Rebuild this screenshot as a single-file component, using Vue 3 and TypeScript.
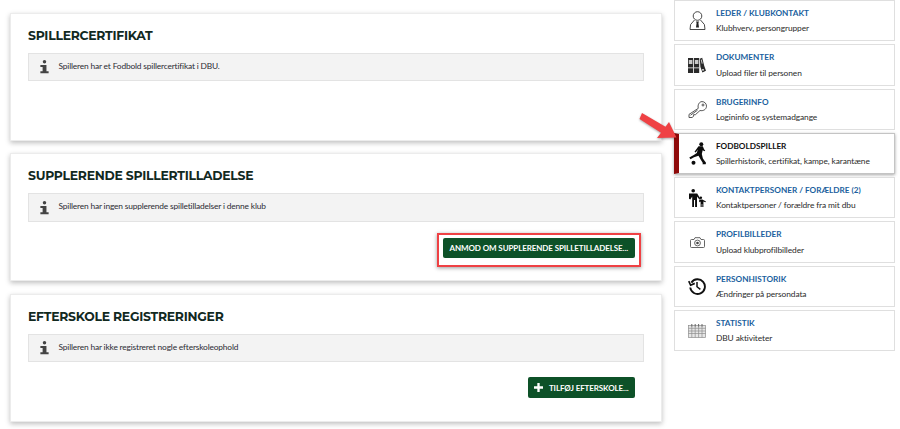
<script setup lang="ts">
const cards = [
  { title: 'SPILLERCERTIFIKAT', text: 'Spilleren har et Fodbold spillercertifikat i DBU.', action: '' },
  { title: 'SUPPLERENDE SPILLERTILLADELSE', text: 'Spilleren har ingen supplerende spilletilladelser i denne klub', action: 'request' },
  { title: 'EFTERSKOLE REGISTRERINGER', text: 'Spilleren har ikke registreret nogle efterskoleophold', action: 'add' },
]
const items = [
  { icon: 'leader', title: 'LEDER / KLUBKONTAKT', sub: 'Klubhverv, persongrupper' },
  { icon: 'docs', title: 'DOKUMENTER', sub: 'Upload filer til personen' },
  { icon: 'key', title: 'BRUGERINFO', sub: 'Logininfo og systemadgange' },
  { icon: 'player', title: 'FODBOLDSPILLER', sub: 'Spillerhistorik, certifikat, kampe, karantæne', active: true },
  { icon: 'family', title: 'KONTAKTPERSONER / FORÆLDRE (2)', sub: 'Kontaktpersoner / forældre fra mit dbu' },
  { icon: 'camera', title: 'PROFILBILLEDER', sub: 'Upload klubprofilbilleder' },
  { icon: 'history', title: 'PERSONHISTORIK', sub: 'Ændringer på persondata' },
  { icon: 'stats', title: 'STATISTIK', sub: 'DBU aktiviteter' },
]
</script>

<template>
  <div class="page">
    <main class="left">
      <div class="stub"></div>
      <section v-for="c in cards" :key="c.title" class="card">
        <h2>{{ c.title }}</h2>
        <div class="alert">
          <svg class="info" viewBox="0 0 12 18" width="9" height="15">
            <circle cx="6" cy="2.600" r="2.300" fill="#444" />
            <path d="M.5 7h8.100v8.400H11.500V18H.5v-2.600h3V9.600h-3z" fill="#444" />
          </svg>
          <span>{{ c.text }}</span>
        </div>
        <div v-if="c.action === 'request'" class="actions">
          <div class="highlight">
            <button class="btn">ANMOD OM SUPPLERENDE SPILLETILLADELSE...</button>
          </div>
        </div>
        <div v-if="c.action === 'add'" class="actions add">
          <button class="btn add-btn">
            <svg viewBox="0 0 10 10" width="9" height="9"><path d="M3.700 0h2.600v3.700H10v2.600H6.300V10H3.700V6.300H0V3.700h3.700z" fill="#fff" /></svg>
            TILFØJ EFTERSKOLE...
          </button>
        </div>
      </section>
    </main>

    <aside class="right">
      <a v-for="i in items" :key="i.title" class="item" :class="{ active: i.active }">
        <span class="ico">
          <svg v-if="i.icon === 'leader'" viewBox="0 0 17 19" width="17" height="19" fill="none" stroke="#333" stroke-width=".9">
            <circle cx="8.500" cy="5" r="4.300" />
            <path d="M5.500 9 1.600 13.500 1 18.500h15l-.6-5L11.500 9" />
            <path d="M7 10.500h3l-.6 1.500.6 4.500H7l.6-4.500z" fill="#222" stroke="none" />
          </svg>
          <svg v-else-if="i.icon === 'docs'" viewBox="0 0 18 16" width="18" height="16" fill="#2a2a2a">
            <rect x="0" y="1" width="5.200" height="15" />
            <rect x="6" y="1" width="5.200" height="15" />
            <path d="m11.800 1.800 2.400-1 2 8 1.800 5-3.600 1.600-2-5.500z" />
            <path d="M.8 3h3.600v4H.8zM6.800 3h3.600v4H6.800zM12.700 2.800l1-.4 1 4-1 .4z" fill="#c9c9c9" />
            <path d="M0 10.500h5.200v.7H0zM6 10.500h5.200v.7H6z" fill="#fff" />
            <circle cx="15" cy="12.800" r=".9" fill="#fff" />
          </svg>
          <svg v-else-if="i.icon === 'key'" viewBox="0 0 19 17" width="19" height="17" fill="none" stroke="#444" stroke-width=".9">
            <path d="M10.300 7.300 1 13.400v3.100h3.300l1.300-1.500v-1.300h1.800l4.600-4.200c2.800.8 6.400-.9 6.500-4.300C18.500 2.300 16.300.6 14 .6c-2.800 0-4.600 3.500-3.700 6.700z" />
            <circle cx="15" cy="4" r="1" />
            <path d="m2.500 14.200 7-5" />
          </svg>
          <svg v-else-if="i.icon === 'player'" viewBox="0 0 17 23" width="17" height="23" fill="#0c0c0c">
            <circle cx="12.300" cy="2.300" r="2" />
            <path d="M9.500 4.200 13.800 4.300 15.200 7.500 16.200 8.200 15.500 9.200 13.700 8.300 12.800 12 13.900 16.500 17 20.800 16.700 22.300 13.500 22.300 13.800 21 11.500 17.200 9.500 13.800 5 15.300 1.500 17.200.3 15.500 4.800 13 7.800 11 8.800 7.500 6.800 10.500 5.500 9.800z" />
            <circle cx="4.500" cy="20.700" r="2" />
          </svg>
          <svg v-else-if="i.icon === 'family'" viewBox="0 0 17 18" width="17" height="18" fill="#0c0c0c">
            <circle cx="4.200" cy="1.800" r="1.800" />
            <path d="M0 4.500h8.200l3 5-1 .7-2.200-2.700V18H6.100v-7H5v7H3.200V7.500L1.300 10.500 0 9.800z" />
            <circle cx="11.800" cy="8.800" r="1.300" />
            <path d="M10.300 10.500h3l3.700 2-.6.800-2-.8V18h-1.100v-3h-.6v3h-1.100v-5.500l-1 .8-.5-.9z" />
          </svg>
          <svg v-else-if="i.icon === 'camera'" viewBox="0 0 15 11" width="15" height="11" fill="none" stroke="#555" stroke-width=".9">
            <path d="M1.500 2.500h2.500l1-1.800h5l1 1.800h2.500a1 1 0 0 1 1 1v6a1 1 0 0 1-1 1h-12a1 1 0 0 1-1-1v-6a1 1 0 0 1 1-1z" />
            <circle cx="7.500" cy="6" r="2.900" />
            <circle cx="7.500" cy="6" r="1.300" fill="#444" stroke="none" />
          </svg>
          <svg v-else-if="i.icon === 'history'" viewBox="0 0 24 24" width="18" height="18" fill="none" stroke="#111" stroke-width="2.500">
            <path d="M4.500 7.500a9.800 9.800 0 1 1-1.500 6.500" />
            <path d="M1 5.500 3.500 11 9 8.500" stroke-width="2.200" />
            <path d="M12 6.500V13l4.500 3.500" stroke-width="2" />
          </svg>
          <svg v-else viewBox="0 0 18 14" width="18" height="14" fill="none" stroke="#8e8e8e" stroke-width=".7">
            <rect x=".4" y="1.500" width="17.200" height="12.100" fill="#e6e6e6" />
            <path d="M.4 4.300h17.200M.4 7h17.200M.4 9.500h17.200M3.800 1.500v12M7.200 1.500v12M10.600 1.500v12M14 1.500v12" />
            <path d="M3.800 0v2.500M7.200 0v2.500M10.600 0v2.500M14 0v2.500" stroke="#666" stroke-width="1" />
          </svg>
        </span>
        <span class="txt">
          <strong>{{ i.title }}</strong>
          <small>{{ i.sub }}</small>
        </span>
      </a>
    </aside>

    <svg class="arrow" viewBox="0 0 44 32" width="44" height="32">
      <path d="M3 0 26.500 13.800 30 9 37.500 24.500 18 25 22 19.800 .5 6z" fill="#ef4144" />
    </svg>
  </div>
</template>

<style>
html, body { margin: 0; background: #fff; overflow: hidden; }
</style>

<style scoped>
.page {
  position: relative;
  width: 900px;
  height: 429px;
  overflow: hidden;
  display: flex;
  align-items: flex-start;
  padding-left: 10px;
  gap: 12.500px;
  box-sizing: border-box;
  font-family: "Lato", "Noto Sans", sans-serif;
  color: #222;
}
.left { width: 651.500px; flex: none; display: flex; flex-direction: column; gap: 12.500px; }
.stub {
  height: 0;
  background: #fff;
  box-shadow: 0 1px 5px rgba(0, 0, 0, .3);
}
.card {
  height: 128px;
  box-sizing: border-box;
  background: #fff;
  border: 1px solid #ececec;
  box-shadow: 0 2px 5px rgba(0, 0, 0, .25);
  padding: 14px 17px 0;
}
h2 {
  margin: 0;
  height: 25px;
  line-height: 16px;
  font-family: "Montserrat", "Lato", sans-serif;
  font-size: 12.400px;
  font-weight: 700;
  letter-spacing: -.25px;
  color: #12291f;
}
.alert {
  height: 28.500px;
  box-sizing: border-box;
  background: #f3f3f3;
  border: 1px solid #e3e3e3;
  display: flex;
  align-items: center;
  padding-left: 11px;
  font-size: 8.400px;
  letter-spacing: -.17px;
  color: #2b2b33;
}
.info { margin-right: 9.500px; flex: none; }
.alert span { margin-top: -2px; }
.actions { display: flex; justify-content: flex-end; margin-top: 11px; margin-right: 2.500px; }
.actions.add { margin-top: 15px; margin-right: 8.500px; }
.highlight {
  border: 2px solid #ef4144;
  padding: 3px 4.500px 7px;
  box-shadow: 0 1px 4px rgba(0, 0, 0, .4);
}
.btn {
  height: 20px;
  border: 0;
  border-radius: 2px;
  background: #0d5128;
  color: #fff;
  font-family: "Lato", "Noto Sans", sans-serif;
  font-size: 8px;
  font-weight: 700;
  letter-spacing: -.1px;
  padding: 0 6.500px;
  display: flex;
  align-items: center;
  gap: 5.500px;
  white-space: nowrap;
}
.add-btn { height: 21px; }
.right { width: 221px; flex: none; display: flex; flex-direction: column; gap: 3px; }
.item {
  height: 41.300px;
  box-sizing: border-box;
  border: 1px solid #dfdfdf;
  background: #fff;
  display: flex;
  position: relative;
}
.item.active {
  border-color: #c4c4c4;
  border-left: 5px solid #8e0a0a;
  box-shadow: 0 1px 3px rgba(0, 0, 0, .35);
}
.ico { width: 41px; box-sizing: border-box; padding-left: 3px; flex: none; display: flex; align-items: center; justify-content: center; }
.active .ico { width: 37px; padding-left: 0; }
.txt { display: flex; flex-direction: column; padding-top: 6px; }
strong { font-size: 8.200px; line-height: 12px; font-weight: 700; color: #1a5f9e; }
.active strong { color: #111; }
small { font-size: 8.400px; line-height: 12px; margin-top: 3.300px; letter-spacing: -.1px; color: #2b2b2b; }
.arrow { position: absolute; left: 639px; top: 113px; filter: drop-shadow(0 1px 1px rgba(0, 0, 0, .35)); }
</style>
